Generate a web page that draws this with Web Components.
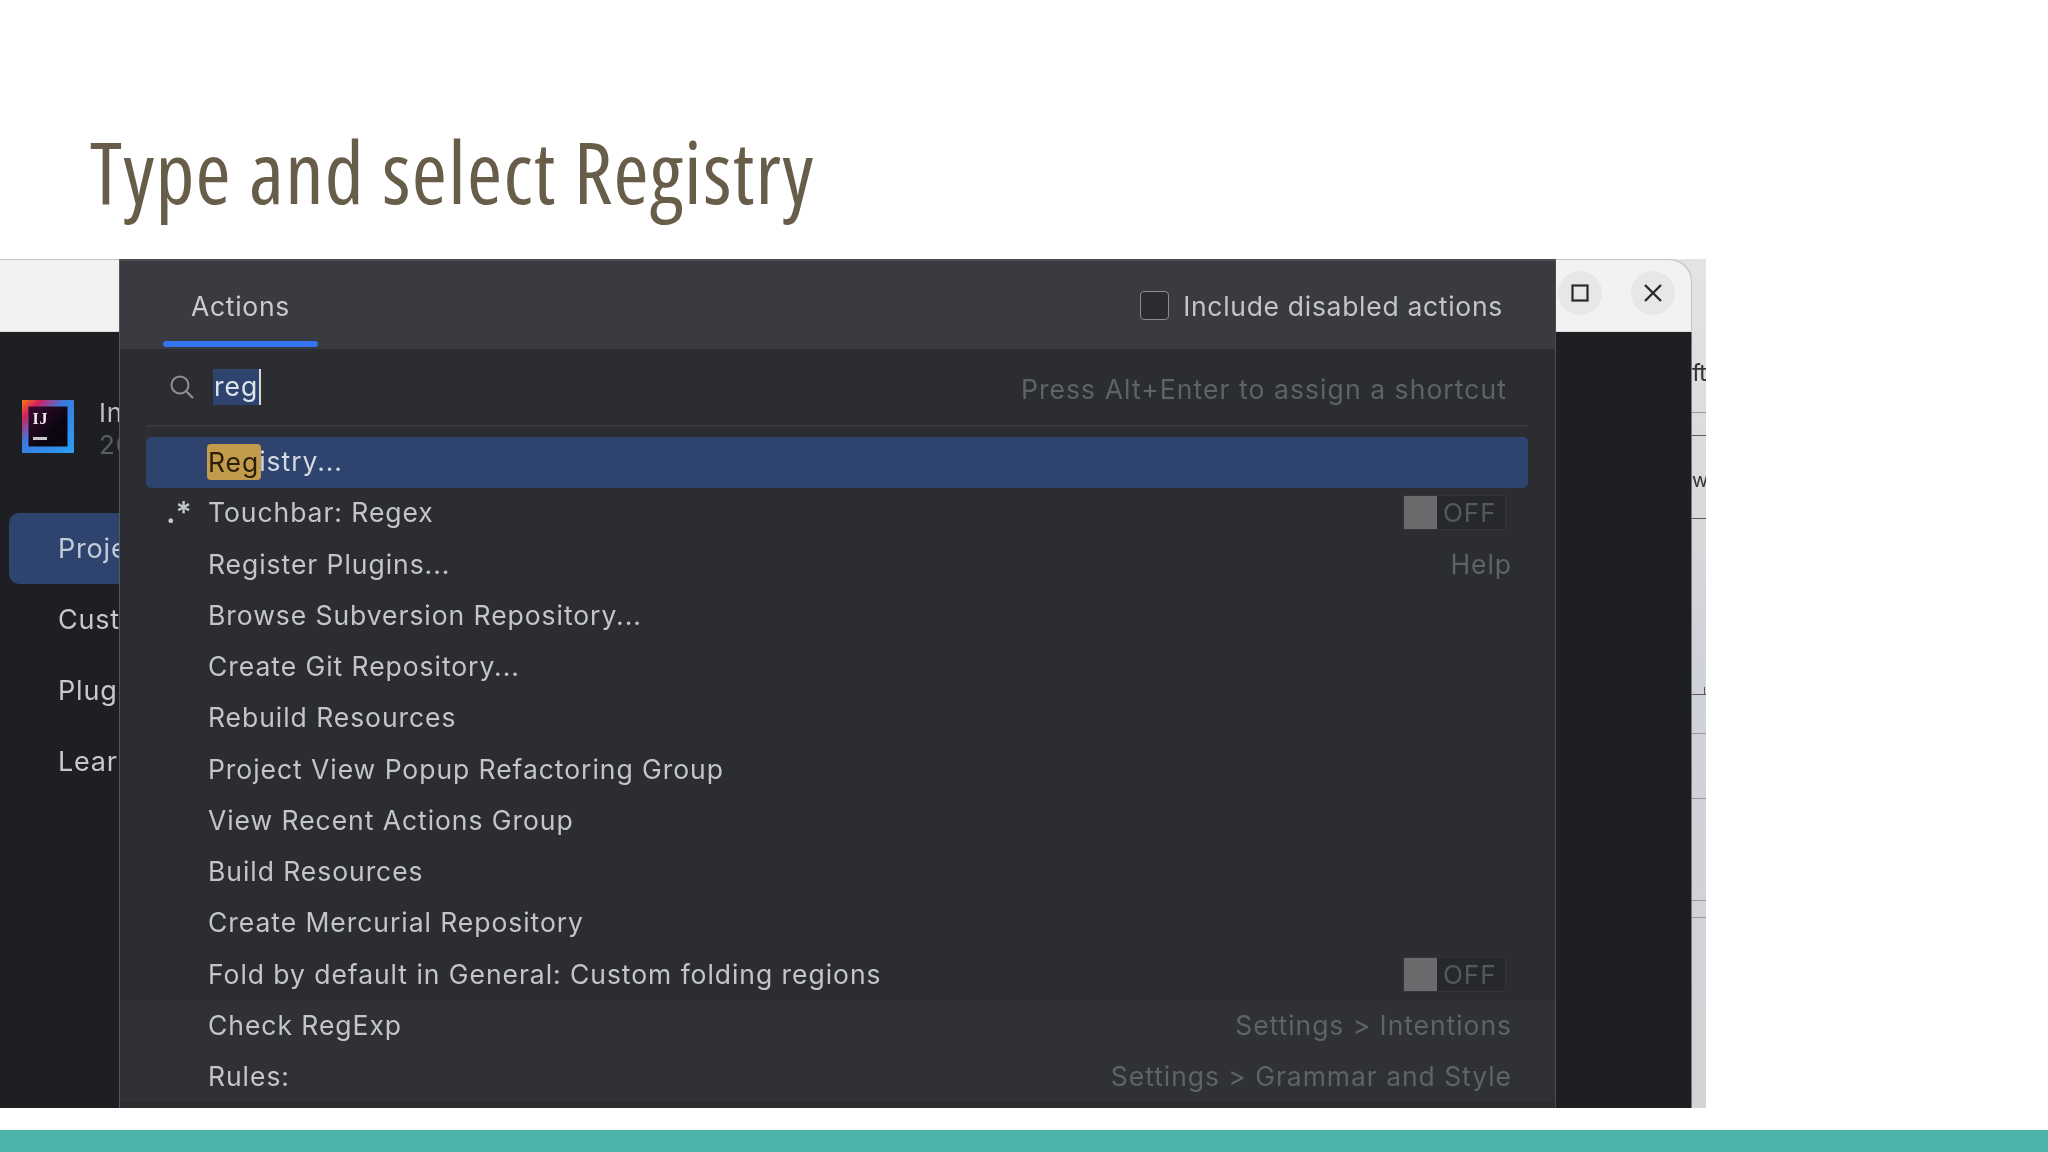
<!DOCTYPE html>
<html lang="en"><head><meta charset="utf-8"><title>Type and select Registry</title>
<style>
html,body{margin:0;padding:0;background:#fff}
body{width:2048px;height:1152px;overflow:hidden}
</style></head>
<body>
<slide-page>
  <ide-shot slot="shot"></ide-shot>
</slide-page>
<script>
const UI='Inter,"Liberation Sans",sans-serif';
function def(name,css,html,setup){
  customElements.define(name,class extends HTMLElement{
    constructor(){super();const r=this.attachShadow({mode:'open'});
      r.innerHTML='<style>'+css+'</style>'+(typeof html==='function'?html(this):html);}
    connectedCallback(){if(setup)setup(this)}
  });
}
def('slide-page',`
:host{display:flex;flex-direction:column;width:2048px;height:1152px;background:#fff}
.head{height:259px;box-sizing:border-box;padding:126px 0 0 90px;flex:none}
h1{margin:0;font:380 85px/90px "Open Sans","Liberation Sans",sans-serif;font-stretch:75%;letter-spacing:1.27px;color:#675d49;white-space:nowrap;}
.shot{height:849px;flex:none}
.gap{height:22px;flex:none}
.bar{height:22px;background:#4db2a8;flex:none}
`,`<div class="head"><h1>Type and select Registry</h1></div>
<div class="shot"><slot name="shot"></slot></div><div class="gap"></div><div class="bar"></div>`);

def('ide-shot',`
:host{display:block;position:relative;width:1706px;height:849px;font-family:${UI};overflow:hidden;filter:blur(.45px)}
.win{display:flex;width:1706px;height:849px}
.main{width:1692px;flex:none;display:flex;flex-direction:column;background:#e2e2e3}
.strip{width:14px;flex:none;background:linear-gradient(#e4e4e5 0,#d9d9db 30%,#cfd2d8 50%,#d4d4d6 100%);display:flex;flex-direction:column;color:#333;overflow:hidden}
.frag{height:1px;background:#9a9a9c;flex:none}
.dk{background:#5a5a5c}
.t{flex:none;height:34px;line-height:34px;white-space:nowrap;font-size:24px;letter-spacing:-1px}
.w{font-size:20px}
.tick{flex:none;height:8px;width:14px;box-sizing:border-box;border-bottom:1px solid #5a5a5c;position:relative}
.tick::after{content:"";position:absolute;right:1px;top:0;width:1px;height:8px;background:#5a5a5c}
.tb{height:73px;flex:none;background:#f2f2f2;border-bottom:1px solid #d8d8d8;border-top-right-radius:22px;box-shadow:inset -1px 1px 0 #c4c4c4;display:flex;justify-content:flex-end;align-items:center;gap:29px;padding:0 17px 5px 0;box-sizing:border-box}
.btn{width:44px;height:44px;border-radius:50%;background:#e7e7e7;display:flex;align-items:center;justify-content:center}
.body{flex:1;background:#1e1f22;display:flex;flex-direction:column;padding-top:68px;box-sizing:border-box;border-right:1px solid #777}
.brand{display:flex;gap:25px;margin-left:22px;color:#bdbfc3;font-size:26px;height:53px;letter-spacing:.8px}
.brand svg{flex:none}
.brand small{display:block;color:#5a5d62;font-size:26px;line-height:32px;margin-top:0}
.brand span{display:block;line-height:32px;margin-top:-3px}
nav{margin:60px 0 0 9px;display:flex;flex-direction:column;color:#c6c8cc;font-size:27px;width:110px;letter-spacing:.8px}
nav div{height:71px;line-height:71px;padding-left:49px;white-space:nowrap}
nav .on{background:#2e436e;border-radius:10px 0 0 10px;color:#c3cad8;}
action-dialog{position:absolute;left:119px;top:0;width:1437px;height:849px}
`,`<div class="win"><div class="main">
<div class="tb">
 <div class="btn"><svg width="20" height="20" viewBox="0 0 20 20"><rect x="2.5" y="2.5" width="15" height="15" fill="none" stroke="#2a2a2a" stroke-width="2.2"/></svg></div>
 <div class="btn"><svg width="20" height="20" viewBox="0 0 20 20"><path d="M2 2 18 18M18 2 2 18" fill="none" stroke="#2a2a2a" stroke-width="2.4"/></svg></div>
</div>
<div class="body">
 <div class="brand">
  <svg width="52" height="53" viewBox="0 0 52 53"><defs><linearGradient id="g" x1="0" y1="0" x2="1" y2="1"><stop offset="0" stop-color="#f97a12"/><stop offset=".18" stop-color="#d3215f"/><stop offset=".42" stop-color="#3a7be0"/><stop offset="1" stop-color="#2a9ff5"/></linearGradient><linearGradient id="d" x1="0" y1="0" x2="1" y2="1"><stop offset="0" stop-color="#3c0a32"/><stop offset=".6" stop-color="#0c0612"/></linearGradient></defs><rect width="52" height="53" fill="url(#g)"/><rect x="6.5" y="6.5" width="39" height="40" fill="url(#d)"/><text x="10.5" y="24" font-family="Liberation Serif,serif" font-weight="700" font-size="16" fill="#f2f0f4">IJ</text><rect x="11" y="37" width="14" height="3" fill="#c9c9cc"/></svg>
  <div><span>In</span><small>20</small></div>
 </div>
 <nav><div class="on">Proje</div><div>Cust</div><div>Plug</div><div>Lear</div></nav>
</div></div>
<div class="strip"><div class="t" style="margin-top:97px">ft</div><div class="frag" style="margin-top:22px"></div><div class="frag dk" style="margin-top:22px"></div><div class="t w" style="margin-top:27px">w</div><div class="frag dk" style="margin-top:21px"></div><div class="tick" style="margin-top:168px"></div><div class="frag" style="margin-top:38px"></div><div class="frag" style="margin-top:64px"></div><div class="frag" style="margin-top:101px"></div><div class="frag" style="margin-top:16px"></div></div>
</div>
<action-dialog></action-dialog>`);

def('action-dialog',`
:host{display:flex;flex-direction:column;background:#2b2d30;border-left:1px solid #55575c;border-right:1px solid #4a4c50;box-sizing:border-box;color:#c3c5c9;font:26.5px/51.2px ${UI};letter-spacing:.95px;overflow:hidden}
.hd{height:90px;flex:none;background:#393b40;display:flex;justify-content:space-between;align-items:flex-start;padding:0 52px 0 43px;box-sizing:border-box;border-top:2px solid #4c4e52;letter-spacing:.7px}
.tab{width:155px;height:88px;box-sizing:border-box;padding-top:20px;text-align:center;line-height:51px;position:relative;color:#c9cbcf}
.tab::after{content:"";position:absolute;left:0;right:0;bottom:2px;height:6px;border-radius:3px;background:#3574f0}
.chk{display:flex;align-items:center;gap:14px;height:91px;}
.box{width:29px;height:29px;border:1.5px solid #8a8c90;border-radius:4px;background:#2b2d30;box-sizing:border-box;margin-top:-2px}
.search{height:78px;flex:none;margin:0 27px 0 26px;border-bottom:2px solid #36383b;display:flex;align-items:center;padding:0 21px 0 23px;box-sizing:border-box}
.search svg{flex:none;margin-right:18px}
.sel{background:#2e436e;color:#dfe3ea;position:relative;padding:0 1px;line-height:34px;height:36px}
.sel::after{content:"";position:absolute;right:-2px;top:0;height:36px;width:2px;background:#d8d8d8}
.hint{margin-left:auto;color:#5f6266;position:relative;top:3px;letter-spacing:1.07px}
.list{flex:1;margin-top:9px;display:flex;flex-direction:column}
`,`<div class="hd"><div class="tab">Actions</div><div class="chk"><div class="box"></div><span>Include disabled actions</span></div></div>
<div class="search">
 <svg width="26" height="26" viewBox="0 0 26 26"><circle cx="11" cy="11" r="8.5" fill="none" stroke="#8e9095" stroke-width="2"/><path d="M17.5 17.5 24 24" stroke="#8e9095" stroke-width="2.2"/></svg>
 <span class="sel">reg</span><span class="hint">Press Alt+Enter to assign a shortcut</span></div>
<div class="list">
 <action-row selected hit="Reg" rest="istry..."></action-row>
 <action-row icon=".*" rest="Touchbar: Regex" toggle></action-row>
 <action-row rest="Register Plugins..." note="Help"></action-row>
 <action-row rest="Browse Subversion Repository..."></action-row>
 <action-row rest="Create Git Repository..."></action-row>
 <action-row rest="Rebuild Resources"></action-row>
 <action-row rest="Project View Popup Refactoring Group"></action-row>
 <action-row rest="View Recent Actions Group"></action-row>
 <action-row rest="Build Resources"></action-row>
 <action-row rest="Create Mercurial Repository"></action-row>
 <action-row rest="Fold by default in General: Custom folding regions" toggle></action-row>
 <action-row tail rest="Check RegExp" note="Settings &gt; Intentions"></action-row>
 <action-row tail rest="Rules:" note="Settings &gt; Grammar and Style"></action-row>
</div>`);

def('action-row',`
:host{display:flex;align-items:center;height:51.25px;flex:none;margin:0 27px;padding:0 16px 0 61px;box-sizing:border-box;position:relative;white-space:nowrap;z-index:0}
:host([selected]){color:#d4d9e2}
:host([selected])::before{content:"";position:absolute;inset:1px 0 -1px -1px;background:#2e436e;border-radius:5px;z-index:-1}
:host([tail]){margin:0;padding:0 43px 0 88px;background:#2f3135}
.hit{background:#c39b4d;color:#2a1f08;border-radius:4px;line-height:36px;height:36px;display:inline-block;margin:0 -2px 0 -1px;padding:0 2px 0 1px;position:relative;z-index:-1}
.ic{position:absolute;left:19px;top:0;color:#c3c5c9;font-size:30px;font-weight:600;letter-spacing:0}
.note{margin-left:auto;color:#5f6266}
.tg{margin-left:auto;margin-right:6px;width:103px;height:35px;background:#26282b;border:1px solid #333539;box-sizing:border-box;display:flex;align-items:center;color:#55585c;font-size:26px;line-height:33px}
.kn{width:33px;height:33px;background:#686a6c;margin-right:6px;flex:none}
`,h=>{
  const a=n=>h.getAttribute(n);
  return (a('icon')?`<span class="ic">${a('icon')}</span>`:'')+
   (a('hit')?`<span class="hit">${a('hit')}</span>`:'')+`<span>${a('rest')}</span>`+
   (h.hasAttribute('toggle')?`<span class="tg"><span class="kn"></span>OFF</span>`:'')+
   (a('note')?`<span class="note">${a('note').replace(/>/g,'&gt;')}</span>`:'');
});
</script>
</body></html>
